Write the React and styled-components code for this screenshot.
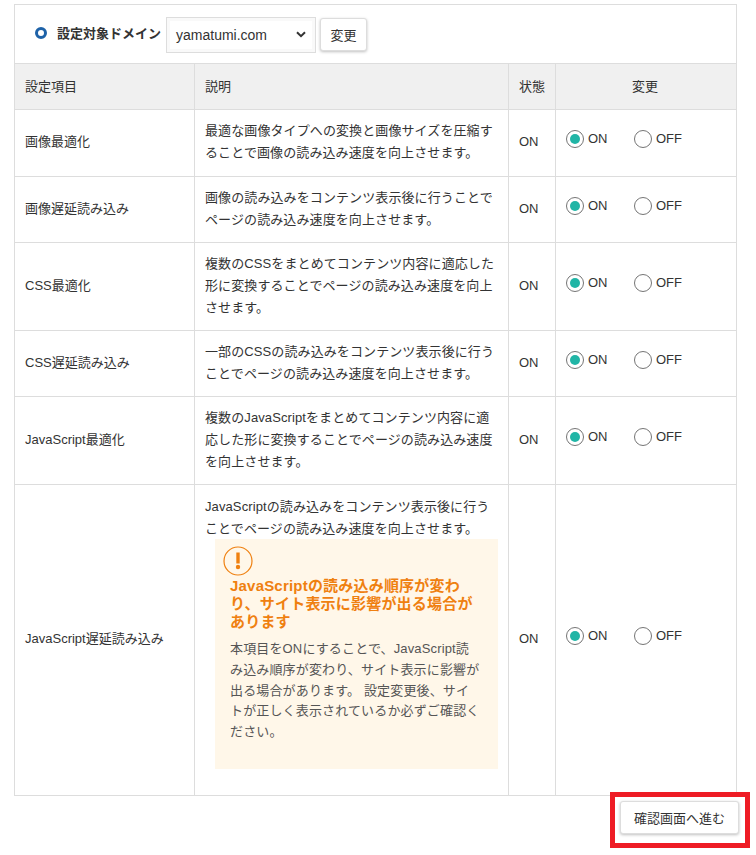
import React from 'react';
import styled, { createGlobalStyle } from 'styled-components';

const GlobalStyle = createGlobalStyle`
  html, body {
    margin: 0;
    padding: 0;
    background: #fff;
    color: #333;
    font-family: "Liberation Sans", "Noto Sans CJK JP", sans-serif;
    font-size: 13px;
  }
`;

const Page = styled.div`
  position: relative;
  width: 756px;
  height: 855px;
  padding: 4px 19px 0 14px;
  box-sizing: border-box;
  overflow: hidden;
`;

const DomainBar = styled.div`
  display: flex;
  align-items: center;
  height: 59px;
  box-sizing: border-box;
  padding: 1px 0 0 20px;
  border: 1px solid #ddd;
  border-bottom: 0;
`;

const Bullet = styled.span`
  width: 12px;
  height: 12px;
  box-sizing: border-box;
  border: 3.5px solid #1e62a8;
  border-radius: 50%;
  margin: -4px 10px 0 0;
`;

const DomainLabel = styled.span`
  font-weight: 700;
  font-size: 13px;
  margin: -4px 5px 0 0;
  white-space: nowrap;
`;

const DomainSelect = styled.div`
  position: relative;
  width: 150px;
  height: 36px;
  box-sizing: border-box;
  border: 1px solid #ddd;
  box-shadow: inset 0 0 0 3px #f9f9f9;
  padding: 0 9px;
  display: flex;
  align-items: center;
  justify-content: space-between;
  font-size: 14px;
  margin-right: 4px;
`;

const Button = styled.button`
  background: #fff;
  border: 1px solid #ddd;
  border-radius: 3px;
  box-shadow: 0 1px 3px rgba(0, 0, 0, 0.25);
  color: #333;
  font-family: inherit;
  font-size: 13px;
  padding: 0;
`;

const SmallButton = styled(Button)`
  width: 47px;
  height: 33px;
`;

const Table = styled.table`
  width: 723px;
  border-collapse: collapse;
  table-layout: fixed;
`;

const Th = styled.th`
  background: #f0f0f0;
  border: 1px solid #ddd;
  box-sizing: border-box;
  font-weight: 400;
  height: 46px;
  padding: 0 ${(p) => (p.$align ? 12 : 10)}px 3px 10px;
  text-align: ${(p) => p.$align || 'left'};
`;

const Td = styled.td`
  border: 1px solid #ddd;
  padding: 8px 10px 10px;
  height: ${(p) => p.$height}px;
  box-sizing: border-box;
  line-height: 22px;
  vertical-align: middle;
`;

const Description = styled.div`
  letter-spacing: 0.1px;
`;

const RadioGroup = styled.div`
  display: flex;
  align-items: center;
  margin-top: -6px;
`;

const RadioLabel = styled.label`
  display: flex;
  align-items: center;
  width: 68px;
  gap: 4px;
`;

const RadioCircle = styled.span`
  position: relative;
  width: 18px;
  height: 18px;
  box-sizing: border-box;
  border: 1px solid #757575;
  border-radius: 50%;
  background: #fff;

  ${(p) => p.$checked && `
    &::after {
      content: '';
      position: absolute;
      inset: 3px;
      border-radius: 50%;
      background: #20b5a6;
    }
  `}
`;

const Notice = styled.div`
  background: #fff7e9;
  margin: -1px 0 13px 10px;
  width: 283px;
  height: 230px;
  box-sizing: border-box;
  padding: 7px 15px;
`;

const NoticeIcon = styled.svg`
  display: block;
  margin-left: -7px;
`;

const NoticeTitle = styled.div`
  color: #ef8010;
  font-size: 15px;
  font-weight: 700;
  line-height: 18px;
  letter-spacing: 0.2px;
  margin: 1px 0 8px;
`;

const NoticeText = styled.div`
  color: #555;
  line-height: 20.8px;
  letter-spacing: 0.15px;
  white-space: nowrap;
`;

const Footer = styled.div`
  display: flex;
  justify-content: flex-end;
  padding: 5px 17px 0 0;
  margin-right: -19px;
`;

const NextButton = styled(Button)`
  width: 119px;
  height: 33px;
`;

const Highlight = styled.div`
  position: absolute;
  left: 610px;
  top: 792px;
  width: 140px;
  height: 56px;
  box-sizing: border-box;
  border: 5px solid #ee1c25;
  pointer-events: none;
`;

const rows = [
  { name: '画像最適化', height: 67, desc: '最適な画像タイプへの変換と画像サイズを圧縮することで画像の読み込み速度を向上させます。' },
  { name: '画像遅延読み込み', height: 66, desc: '画像の読み込みをコンテンツ表示後に行うことでページの読み込み速度を向上させます。' },
  { name: 'CSS最適化', height: 88, desc: '複数のCSSをまとめてコンテンツ内容に適応した形に変換することでページの読み込み速度を向上させます。' },
  { name: 'CSS遅延読み込み', height: 66, desc: '一部のCSSの読み込みをコンテンツ表示後に行うことでページの読み込み速度を向上させます。' },
  { name: 'JavaScript最適化', height: 88, desc: '複数のJavaScriptをまとめてコンテンツ内容に適応した形に変換することでページの読み込み速度を向上させます。' },
  { name: 'JavaScript遅延読み込み', height: 311, desc: 'JavaScriptの読み込みをコンテンツ表示後に行うことでページの読み込み速度を向上させます。', notice: true },
];

function WarningIcon() {
  return (
    <NoticeIcon width="30" height="30" viewBox="0 0 30 30">
      <circle cx="15" cy="15" r="14" fill="none" stroke="#ef8010" strokeWidth="1.2" />
      <rect x="13.3" y="6.5" width="3.4" height="11" fill="#ef8010" />
      <circle cx="15" cy="21" r="2.2" fill="#ef8010" />
    </NoticeIcon>
  );
}

function App() {
  return (
    <Page>
      <GlobalStyle />
      <DomainBar>
        <Bullet />
        <DomainLabel>設定対象ドメイン</DomainLabel>
        <DomainSelect>
          yamatumi.com
          <svg width="10" height="7" viewBox="0 0 10 7">
            <path d="M1 1.2l4 4 4-4" fill="none" stroke="#333" strokeWidth="2" />
          </svg>
        </DomainSelect>
        <SmallButton>変更</SmallButton>
      </DomainBar>
      <Table>
        <colgroup>
          <col style={{ width: 180 }} />
          <col style={{ width: 314 }} />
          <col style={{ width: 47 }} />
          <col />
        </colgroup>
        <thead>
          <tr>
            <Th>設定項目</Th>
            <Th>説明</Th>
            <Th>状態</Th>
            <Th $align="center">変更</Th>
          </tr>
        </thead>
        <tbody>
          {rows.map((row) => (
            <tr key={row.name}>
              <Td $height={row.height}>{row.name}</Td>
              <Td $height={row.height}>
                <Description>
                  {row.notice ? (
                    <>JavaScriptの読み込みをコンテンツ表示後に行う<br />ことでページの読み込み速度を向上させます。</>
                  ) : row.desc}
                </Description>
                {row.notice && (
                  <Notice>
                    <WarningIcon />
                    <NoticeTitle>JavaScriptの読み込み順序が変わり、サイト表示に影響が出る場合があります</NoticeTitle>
                    <NoticeText>
                      本項目をONにすることで、JavaScript読<br />
                      み込み順序が変わり、サイト表示に影響が<br />
                      出る場合があります。 設定変更後、サイ<br />
                      トが正しく表示されているか必ずご確認く<br />
                      ださい。
                    </NoticeText>
                  </Notice>
                )}
              </Td>
              <Td $height={row.height}>ON</Td>
              <Td $height={row.height}>
                <RadioGroup>
                  <RadioLabel><RadioCircle $checked />ON</RadioLabel>
                  <RadioLabel><RadioCircle />OFF</RadioLabel>
                </RadioGroup>
              </Td>
            </tr>
          ))}
        </tbody>
      </Table>
      <Footer>
        <NextButton>確認画面へ進む</NextButton>
      </Footer>
      <Highlight />
    </Page>
  );
}

export default App;
